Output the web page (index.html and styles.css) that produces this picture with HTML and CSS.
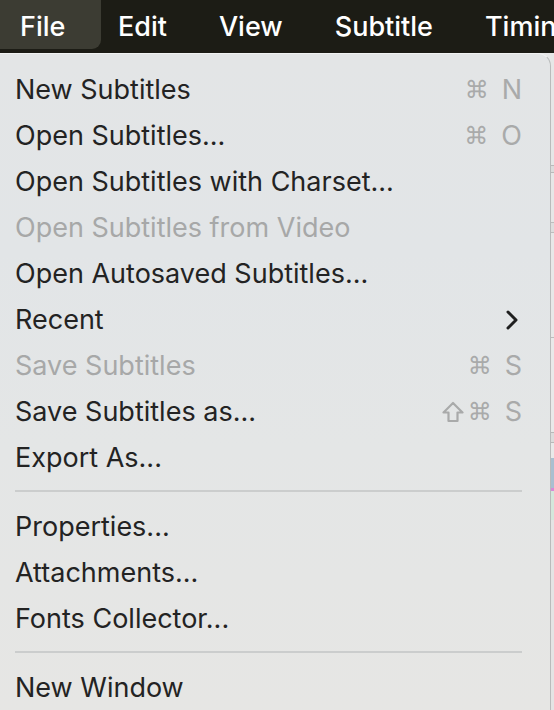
FILE: index.html
```html
<!DOCTYPE html>
<html lang="en">
<head>
<meta charset="utf-8">
<title>File menu</title>
<link rel="stylesheet" href="styles.css">
</head>
<body>
<div class="screen">
  <header class="menubar">
    <span class="mb-item mb-active">File</span>
    <span class="mb-item">Edit</span>
    <span class="mb-item">View</span>
    <span class="mb-item">Subtitle</span>
    <span class="mb-item">Timing</span>
  </header>
  <div class="stage">
    <div class="menu">
      <div class="row"><span class="label">New Subtitles</span><span class="keys"><span class="sym">⌘</span><span class="key">N</span></span></div>
      <div class="row"><span class="label">Open Subtitles...</span><span class="keys"><span class="sym">⌘</span><span class="key">O</span></span></div>
      <div class="row"><span class="label">Open Subtitles with Charset...</span></div>
      <div class="row disabled"><span class="label">Open Subtitles from Video</span></div>
      <div class="row"><span class="label">Open Autosaved Subtitles...</span></div>
      <div class="row"><span class="label">Recent</span><svg class="chevron" width="14" height="22" viewBox="0 0 14 22"><polyline points="3,3 11,11 3,19" fill="none" stroke="#1f1f1f" stroke-width="3" stroke-linecap="round" stroke-linejoin="round"/></svg></div>
      <div class="row disabled"><span class="label">Save Subtitles</span><span class="keys"><span class="sym">⌘</span><span class="key">S</span></span></div>
      <div class="row"><span class="label">Save Subtitles as...</span><span class="keys"><svg class="shift" width="22" height="22" viewBox="0 0 22 22"><path d="M11 2 L20.5 11.5 L15.5 11.5 L15.5 20 L6.5 20 L6.5 11.5 L1.5 11.5 Z" fill="none" stroke="#a9aaaa" stroke-width="2.2" stroke-linejoin="round"/></svg><span class="sym">⌘</span><span class="key">S</span></span></div>
      <div class="row"><span class="label">Export As...</span></div>
      <div class="sep"></div>
      <div class="row"><span class="label">Properties...</span></div>
      <div class="row"><span class="label">Attachments...</span></div>
      <div class="row"><span class="label">Fonts Collector...</span></div>
      <div class="sep"></div>
      <div class="row"><span class="label">New Window</span></div>
    </div>
    <div class="backdrop"></div>
  </div>
</div>
</body>
</html>
```

FILE: styles.css
```css
html, body {
  margin: 0;
  padding: 0;
}
*, *::before, *::after {
  box-sizing: border-box;
}
body {
  width: 554px;
  height: 710px;
  overflow: hidden;
  font-family: Inter, "Noto Sans", sans-serif;
  background: #e7e7e7;
}
.screen {
  display: flex;
  flex-direction: column;
  width: 554px;
  height: 710px;
}
.menubar {
  display: flex;
  align-items: flex-start;
  height: 53px;
  flex: none;
  background: #1c1c15;
  color: #ffffff;
  font-size: 27px;
  font-weight: 500;
  white-space: nowrap;
  overflow: hidden;
}
.mb-item {
  height: 53px;
  line-height: 53px;
  padding: 0 26px;
  flex: none;
}
.mb-active {
  height: 49px;
  width: 101px;
  padding: 0 0 0 20px;
  margin-right: -9px;
  background: #3c3c33;
  border-radius: 0 0 9px 0;
}
.stage {
  flex: 1;
  display: flex;
  background: #e7e8e8;
  min-height: 0;
}
.menu {
  width: 551px;
  flex: none;
  padding: 13px 28px 0 15px;
  border-top: 1px solid #f1f2f2;
  border-right: 1px solid #b9bbbb;
  border-top-right-radius: 13px;
  background: linear-gradient(180deg, #e3e5e6 0%, #e2e5e7 30%, #e4e6e6 60%, #e6e6e4 100%);
  color: #232323;
  font-size: 27px;
  overflow: hidden;
}
.row {
  display: flex;
  align-items: center;
  justify-content: space-between;
  height: 46px;
  line-height: 46px;
  white-space: nowrap;
}
.disabled .label {
  color: #a7a8a8;
}
.keys {
  display: flex;
  align-items: center;
  color: #a9aaaa;
}
.sym {
  font-family: "DejaVu Sans", sans-serif;
  font-size: 24px;
  margin-right: 13px;
}
.shift {
  margin-right: 4px;
}
.key {
  font-size: 27px;
}
.chevron {
  margin-right: 3px;
}
.sep {
  height: 2px;
  margin: 9px 0 12px;
  background: #cbcdcd;
}
.backdrop {
  flex: 1;
  background: linear-gradient(180deg,
    #e6e7e7 0px, #e6e7e7 112px,
    #b9b9b9 112px, #b9b9b9 113px,
    #dcdcdc 113px, #dcdcdc 119px,
    #b9b9b9 119px, #b9b9b9 120px,
    #e7e7e7 120px, #e7e7e7 169px,
    #bdbdbd 169px, #bdbdbd 170px,
    #dedede 170px, #dedede 179px,
    #bdbdbd 179px, #bdbdbd 180px,
    #e8e8e8 180px, #e8e8e8 284px,
    #bcbcbc 284px, #bcbcbc 285px,
    #e9e9e9 285px, #e9e9e9 379px,
    #b8b8b8 379px, #b8b8b8 380px,
    #dcdcdc 380px, #dcdcdc 389px,
    #b8b8b8 389px, #b8b8b8 390px,
    #e9e9e9 390px, #e9e9e9 405px,
    #a9bfd0 405px, #a9bfd0 435px,
    #d98ad6 435px, #d98ad6 438px,
    #d4e7db 438px, #d4e7db 467px,
    #e4e4e4 467px, #e4e4e4 100%);
}
```
